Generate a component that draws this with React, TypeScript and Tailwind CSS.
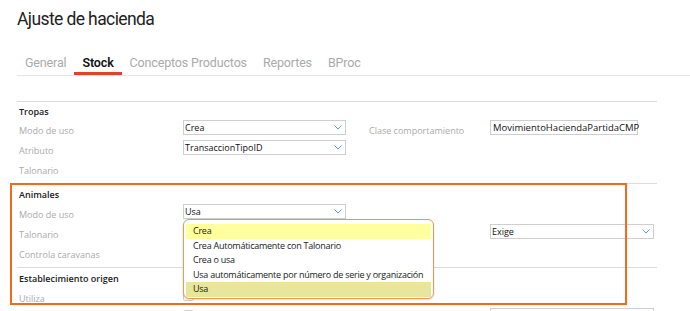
import React from "react";

const Chevron = () => (
  <svg width="8" height="5" viewBox="0 0 8 5" className="shrink-0">
    <path d="M0.5 0.5 L4 4 L7.5 0.5" fill="none" stroke="#5b9bd5" strokeWidth="1" />
  </svg>
);

const Select = ({ value, w = "w-[164px]" }: { value: string; w?: string }) => (
  <div className={`${w} h-[15px] flex items-center justify-between border border-[#cfcfcf] bg-white pl-[1px] pr-[3px]`}>
    <span className="text-[9px] leading-none font-medium text-[#111]">{value}</span>
    <Chevron />
  </div>
);

const Checkbox = () => (
  <div className="w-[11px] h-[11px] border border-[#cfcfcf] rounded-[2px] bg-white" />
);

interface RowProps {
  label?: string;
  control?: React.ReactNode;
  rightLabel?: string;
  rightControl?: React.ReactNode;
}

const Row = ({ label, control, rightLabel, rightControl }: RowProps) => (
  <div className="flex h-[20px] items-start">
    <div className="w-[166px] pl-[2px] pt-[1px] leading-[20px] text-[#aaa]">{label}</div>
    <div className="w-[164px]">{control}</div>
    <div className="w-[143px] pl-[22px] pt-[1px] leading-[20px] text-[#aaa]">{rightLabel}</div>
    <div>{rightControl}</div>
  </div>
);

const Section = ({
  title,
  head = "h-[18px] pt-[2px]",
  children,
}: {
  title: string;
  head?: string;
  children: React.ReactNode;
}) => (
  <div className="border-t border-[#dcdcdc] pb-[3px]">
    <div className={`${head} pl-[2px] leading-[16px] text-[#1a1a1a] font-semibold`}>{title}</div>
    {children}
  </div>
);

const tabs = ["General", "Stock", "Conceptos Productos", "Reportes", "BProc"];

const options = [
  "Crea",
  "Crea Automáticamente con Talonario",
  "Crea o usa",
  "Usa automáticamente por número de serie y organización",
  "Usa",
];

export default function App() {
  return (
    <div className="relative w-[690px] h-[311px] overflow-hidden bg-white">
      <div className="h-[38px] pl-[17px] pt-[7px] text-[17.5px] tracking-[-0.6px] leading-[24px] text-[#222] font-['Roboto',sans-serif]">
        Ajuste de hacienda
      </div>

      <div className="mt-[13px] ml-[17px] border-b border-[#e6e6e6] font-['Roboto',sans-serif] text-[12.5px] tracking-[-0.15px]">
        <div className="flex">
          {tabs.map((t) => (
            <div
              key={t}
              className={`h-[24px] px-[8px] leading-[23px] ${
                t === "Stock" ? "text-[#111] font-semibold border-b-[3px] border-[#e2402b]" : "text-[#aaa]"
              }`}
            >
              {t}
            </div>
          ))}
        </div>
      </div>

      <div className="ml-[17px] mt-[25px] w-[640px] text-[9px] font-['Open_Sans',sans-serif]">
        <Section title="Tropas">
          <Row
            label="Modo de uso"
            control={<Select value="Crea" w="w-[163px]" />}
            rightLabel="Clase comportamiento"
            rightControl={
              <div className="w-[148px] h-[15px] border border-[#cfcfcf] pl-[2px] text-[9.5px] leading-[13px] text-[#111]">
                MovimientoHaciendaPartidaCMP
              </div>
            }
          />
          <Row label="Atributo" control={<Select value="TransaccionTipoID" w="w-[163px]" />} />
          <Row label="Talonario" />
        </Section>
        <Section title="Animales" head="h-[20px] pt-[3px]">
          <Row label="Modo de uso" control={<Select value="Usa" w="w-[163px]" />} />
          <Row
            label="Talonario"
            rightLabel="Talonario"
            rightControl={<Select value="Exige" w="w-[164px]" />}
          />
          <Row label="Controla caravanas" />
        </Section>
        <Section title="Establecimiento origen" head="h-[20px] pt-[3px]">
          <Row label="Utiliza" control={<div className="pt-[2px]"><Checkbox /></div>} />
          <Row
            control={<div className="pt-[2px]"><Checkbox /></div>}
            rightControl={<div className="w-[164px] h-[15px] border border-[#cfcfcf]" />}
          />
        </Section>
      </div>

      {/* open dropdown */}
      <div className="absolute left-[183px] top-[219px] w-[251px] h-[80px] rounded-[6px] border border-[#ec9a4a] bg-white shadow-sm pt-[4px] px-[2px] font-['Open_Sans',sans-serif] text-[9px] tracking-[-0.25px] text-[#222]">
        {options.map((o, i) => (
          <div
            key={o}
            className={`h-[14.5px] leading-[14.5px] pl-[7px] whitespace-nowrap ${
              i === 0 ? "bg-[#ffff9e]" : i === 4 ? "bg-[#e9e59c]" : ""
            }`}
          >
            {o}
          </div>
        ))}
      </div>

      {/* annotation */}
      <div className="absolute left-[10px] top-[183px] w-[617px] h-[122px] border-2 border-[#f26a1b] pointer-events-none" />
    </div>
  );
}
